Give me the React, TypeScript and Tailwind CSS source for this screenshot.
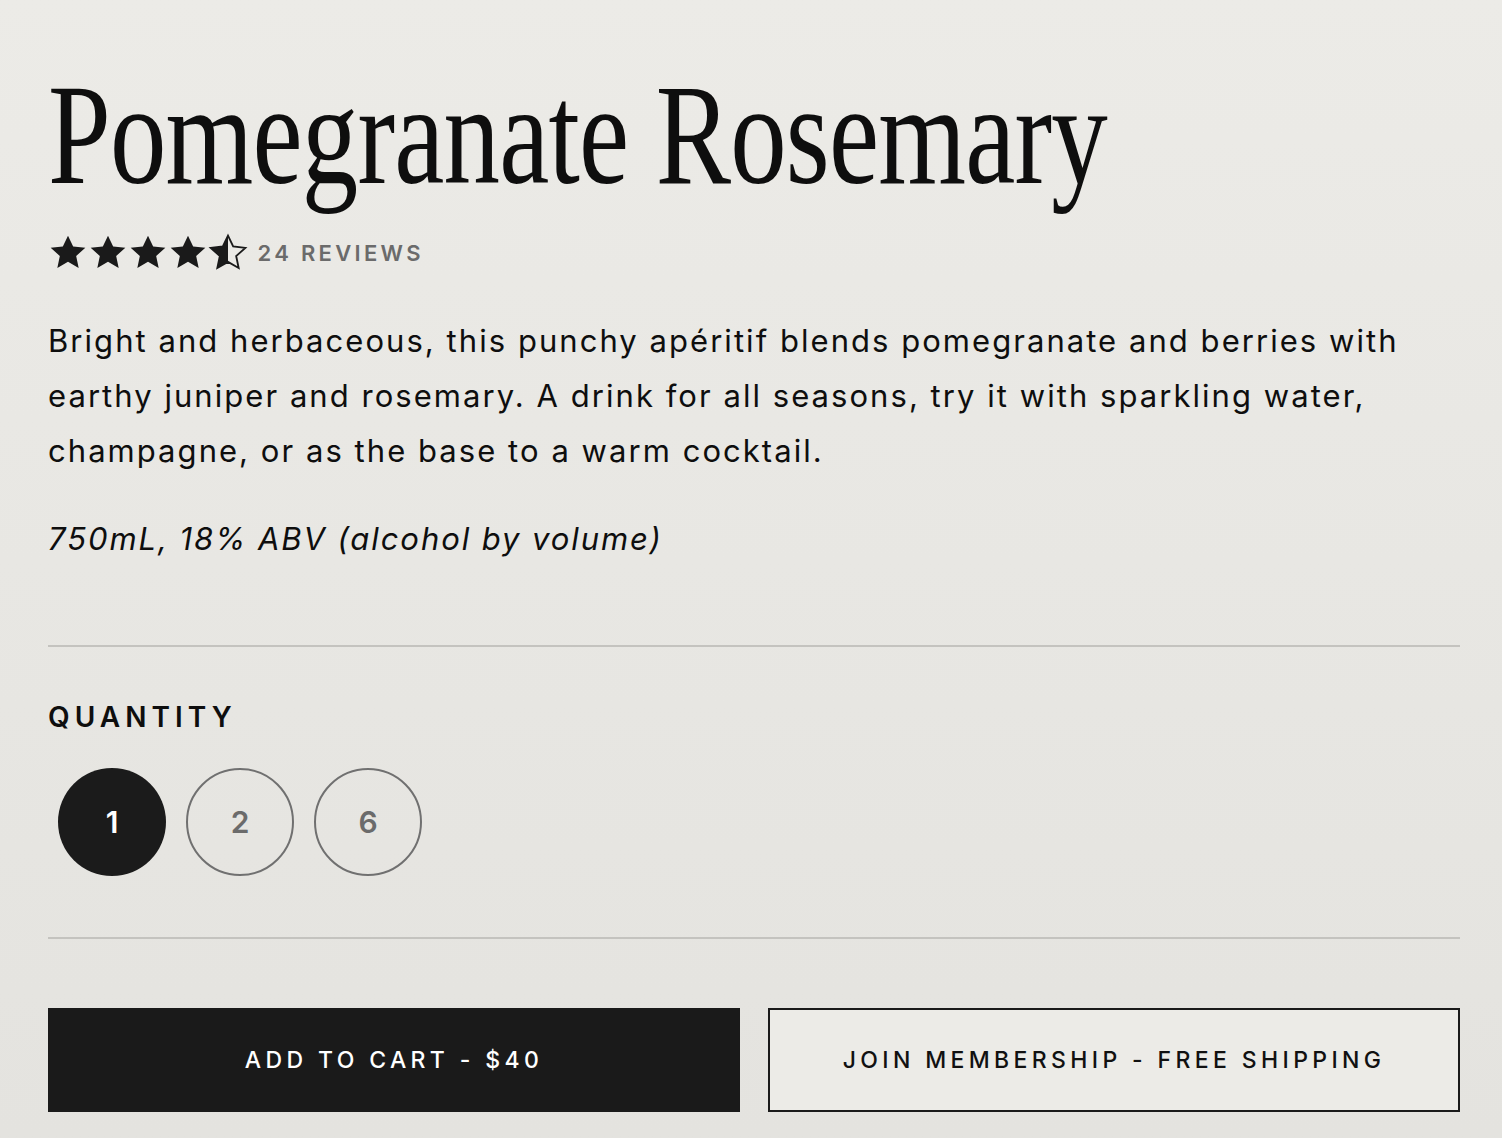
import React, { useState } from "react"

const STAR = "12,1.6 15.1,8.1 22.4,8.9 16.9,13.8 18.4,21 12,17.3 5.6,21 7.1,13.8 1.6,8.9 8.9,8.1"

function Star({ half }: { half?: boolean }) {
  if (half) {
    return (
      <svg width="40" height="40" viewBox="0 0 24 24">
        <defs>
          <clipPath id="leftHalf">
            <rect x="0" y="0" width="12" height="24" />
          </clipPath>
        </defs>
        <polygon points={STAR} fill="none" stroke="#1a1a1a" strokeWidth="1.1" strokeLinejoin="miter" />
        <polygon points={STAR} fill="#1a1a1a" clipPath="url(#leftHalf)" />
      </svg>
    )
  }
  return (
    <svg width="40" height="40" viewBox="0 0 24 24">
      <polygon points={STAR} fill="#1a1a1a" />
    </svg>
  )
}

export default function App() {
  const [qty, setQty] = useState(1)

  return (
    <div className="min-h-[1138px] w-full bg-gradient-to-b from-[#ecebe7] to-[#e4e3df] text-[#0e0e0e]">
      <div className="pl-12 pr-[42px] pt-[59px] pb-6">
        {/* Title */}
        <h1 className="origin-left scale-x-[0.778] whitespace-nowrap text-[145px] leading-[150px] tracking-[-1px] font-['Liberation_Serif',serif]">
          Pomegranate Rosemary
        </h1>

        {/* Rating */}
        <div className="mt-[24px] flex h-10 items-center">
          <div className="-ml-[0.5px] flex">
            <Star />
            <Star />
            <Star />
            <Star />
            <Star half />
          </div>
          <span className="ml-[10px] text-[22px] font-semibold tracking-[0.15em] text-[#6b6b6b] font-['Inter',sans-serif]">
            24 REVIEWS
          </span>
        </div>

        {/* Description */}
        <p className="mt-[40px] text-[31px] leading-[55px] tracking-[0.066em] font-['Inter',sans-serif]">
          Bright and herbaceous, this punchy apéritif blends pomegranate and berries with
          <br />
          earthy juniper and rosemary. A drink for all seasons, try it with sparkling water,
          <br />
          champagne, or as the base to a warm cocktail.
        </p>
        <p className="mt-[33px] text-[31px] leading-[55px] tracking-[0.062em] italic font-['Inter',sans-serif]">
          750mL, 18% ABV (alcohol by volume)
        </p>

        <div className="mt-[79px] h-[2px] bg-[#c4c3bf]" />

        {/* Quantity */}
        <div className="mt-[56px] text-[28px] leading-[28px] font-semibold tracking-[0.18em] font-['Inter',sans-serif]">
          QUANTITY
        </div>
        <div className="mt-[37px] ml-[10px] flex gap-[20px]">
          {[1, 2, 6].map((n) =>
            qty === n ? (
              <button
                key={n}
                onClick={() => setQty(n)}
                className="flex h-[108px] w-[108px] items-center justify-center rounded-full bg-[#1b1b1b] text-[30px] font-semibold text-white font-['Inter',sans-serif]"
              >
                {n}
              </button>
            ) : (
              <button
                key={n}
                onClick={() => setQty(n)}
                className="flex h-[108px] w-[108px] items-center justify-center rounded-full border-2 border-[#707070] text-[30px] font-semibold text-[#6b6b6b] font-['Inter',sans-serif]"
              >
                {n}
              </button>
            )
          )}
        </div>

        <div className="mt-[61px] h-[2px] bg-[#c4c3bf]" />

        {/* Actions */}
        <div className="mt-[69px] grid grid-cols-2 gap-[28px]">
          <button className="flex h-[104px] items-center justify-center bg-[#1a1a1a] text-[23px] font-medium tracking-[0.19em] text-white font-['Inter',sans-serif]">
            ADD TO CART - $40
          </button>
          <button className="flex h-[104px] items-center justify-center border-2 border-[#1a1a1a] bg-[#ecebe7] text-[23px] font-medium tracking-[0.19em] text-[#111] font-['Inter',sans-serif]">
            JOIN MEMBERSHIP - FREE SHIPPING
          </button>
        </div>
      </div>
    </div>
  )
}
